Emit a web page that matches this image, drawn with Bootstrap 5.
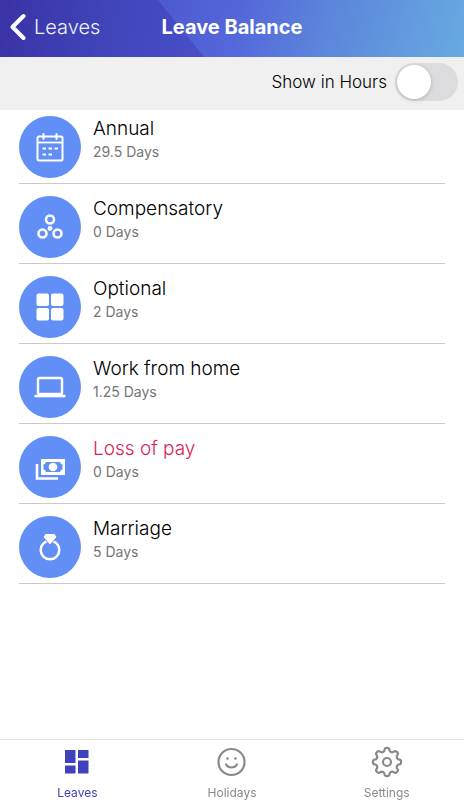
<!DOCTYPE html>
<html lang="en">
<head>
<meta charset="utf-8">
<meta name="viewport" content="width=device-width, initial-scale=1">
<title>Leave Balance</title>
<link href="https://cdn.jsdelivr.net/npm/bootstrap@5.3.0/dist/css/bootstrap.min.css" rel="stylesheet">
<style>
body{font-family:Inter,"Liberation Sans",sans-serif;color:#111}
.app-header{display:grid;grid-template-columns:1fr auto 1fr;height:57px;padding:0 8px 3px;background:linear-gradient(100deg,#3a32a6,#4046ba 25%,#484fc8 45%);position:relative}
.app-header::before{content:"";position:absolute;inset:0;background:linear-gradient(105deg,#4c59cf 33%,#5466da 50%,#5c86db 70%,#68aae2);clip-path:polygon(34% 0,100% 0,100% 100%,44% 100%)}
.app-header>*{position:relative}
.back-link{font-size:20px;line-height:28px;font-weight:350;color:#eef0ff}
.app-title{font-size:20px;line-height:28px;font-weight:700;color:#fff}
.unit-bar{height:53px;background:#f0f0f1;padding:0 6px 3px 0}
.unit-bar label{font-size:17px;line-height:24px;font-weight:350;color:#000}
.ios-switch.form-check-input{width:63px;height:38px;margin:0;float:none;border:0;border-radius:19px;background:#dcdcde;display:flex;align-items:center;padding:0 2px;flex:none}
.ios-switch::before{content:"";width:34px;height:34px;border-radius:50%;background:#fff;box-shadow:0 1px 4px #0003}
.ios-switch.form-check-input:checked{background:#628ff5;justify-content:flex-end}
.leave-list{padding:0 19px}
.leave-item{padding:12px 0 5px;border-bottom:1px solid #cbcbcd;gap:12px}
.leave-item:first-child{padding-top:6px}
.leave-icon{width:62px;height:62px;background:#628ff5;flex:none}
.leave-name{font-size:19px;line-height:26px;font-weight:350;color:#000;margin:0}
.leave-days{font-size:14px;line-height:20px;color:#757577;margin:0}
.leave-unpaid{color:#d81e56}
.tab-bar{height:61px;border-top:1px solid #e2e2e4}
.tab-link{font-size:12px;line-height:18px;color:#89898b;padding-top:6px;gap:6px}
.tab-link.active{color:#4042bb}
</style>
<script src="https://cdn.jsdelivr.net/npm/bootstrap@5.3.0/dist/js/bootstrap.bundle.min.js"></script>
</head>
<body class="d-flex flex-column min-vh-100 bg-white">
<header class="app-header align-items-center">
  <a href="#" class="back-link d-flex align-items-center text-decoration-none gap-2">
    <svg width="18" height="28" viewBox="0 0 18 28" fill="none" stroke="#fff" stroke-width="4" stroke-linecap="round" stroke-linejoin="round"><path d="M15.500 3 4.500 14l11 11"/></svg>Leaves</a>
  <h1 class="app-title m-0">Leave Balance</h1>
</header>
<div class="unit-bar d-flex align-items-center justify-content-end gap-2">
  <label for="hours">Show in Hours</label>
  <input class="form-check-input ios-switch" type="checkbox" role="switch" id="hours">
</div>
<main class="flex-grow-1">
<ul class="leave-list list-unstyled m-0">
  <li class="leave-item d-flex">
    <span class="leave-icon rounded-circle d-flex align-items-center justify-content-center">
      <svg width="32" height="32" viewBox="0 0 32 32" fill="none" stroke="#fff" stroke-width="2"><rect x="3.500" y="5.500" width="25" height="24" rx="1.500"/><path d="M3 11.500h26" stroke-width="1.800"/><path d="M9.500 3v5M22.500 3v5" stroke-linecap="round"/><path d="M8.500 17.500H12M14.500 17.500H18M20.500 17.500H24M8.500 23.500H12M14.500 23.500H18"/></svg></span>
    <div><h2 class="leave-name">Annual</h2><p class="leave-days">29.5 Days</p></div>
  </li>
  <li class="leave-item d-flex">
    <span class="leave-icon rounded-circle d-flex align-items-center justify-content-center">
      <svg width="32" height="32" viewBox="0 0 32 32" fill="none" stroke="#fff" stroke-width="2.500"><circle cx="16" cy="8.500" r="4"/><circle cx="8.500" cy="22.500" r="4"/><circle cx="23.500" cy="22.500" r="4"/><circle cx="16" cy="17.500" r="2.400" fill="#fff" stroke="none"/></svg></span>
    <div><h2 class="leave-name">Compensatory</h2><p class="leave-days">0 Days</p></div>
  </li>
  <li class="leave-item d-flex">
    <span class="leave-icon rounded-circle d-flex align-items-center justify-content-center">
      <svg width="32" height="32" viewBox="0 0 32 32" fill="#fff"><rect x="2.500" y="2.500" width="12.500" height="12.500" rx="2"/><rect x="17" y="2.500" width="12.500" height="12.500" rx="2"/><rect x="2.500" y="17" width="12.500" height="12.500" rx="2"/><rect x="17" y="17" width="12.500" height="12.500" rx="2"/></svg></span>
    <div><h2 class="leave-name">Optional</h2><p class="leave-days">2 Days</p></div>
  </li>
  <li class="leave-item d-flex">
    <span class="leave-icon rounded-circle d-flex align-items-center justify-content-center">
      <svg width="32" height="32" viewBox="0 0 32 32" fill="none" stroke="#fff"><rect x="4" y="7" width="24" height="16" rx="1.500" stroke-width="2.400"/><path d="M.5 25h31" stroke-width="2.600"/></svg></span>
    <div><h2 class="leave-name">Work from home</h2><p class="leave-days">1.25 Days</p></div>
  </li>
  <li class="leave-item d-flex">
    <span class="leave-icon rounded-circle d-flex align-items-center justify-content-center">
      <svg width="32" height="32" viewBox="0 0 32 32"><path d="M3 13v14.500h21" fill="none" stroke="#fff" stroke-width="2.600"/><path fill="#fff" fill-rule="evenodd" d="M7 8h24v16H7zM12 11a3 3 0 0 1-2.500 2.500v5A3 3 0 0 1 12 21h14a3 3 0 0 1 2.500-2.500v-5A3 3 0 0 1 26 11z"/><circle cx="19" cy="16" r="4.300" fill="#fff"/></svg></span>
    <div><h2 class="leave-name leave-unpaid">Loss of pay</h2><p class="leave-days">0 Days</p></div>
  </li>
  <li class="leave-item d-flex">
    <span class="leave-icon rounded-circle d-flex align-items-center justify-content-center">
      <svg width="32" height="32" viewBox="0 0 32 32"><circle cx="16" cy="19" r="9.300" fill="none" stroke="#fff" stroke-width="2.500"/><path d="M11.500 2.500h9L23 6l-7 8-7-8z" fill="#fff" stroke="#628ff5" stroke-width="1"/></svg></span>
    <div><h2 class="leave-name">Marriage</h2><p class="leave-days">5 Days</p></div>
  </li>
</ul>
</main>
<nav class="tab-bar row g-0 text-center bg-white sticky-bottom" aria-label="Main">
  <a href="#" class="tab-link active col d-flex flex-column align-items-center text-decoration-none" aria-current="page">
    <svg width="32" height="32" viewBox="0 0 32 32" fill="#4042bb"><path d="M4 4h10.500v13H4zM17 4h10.500v8H17zM4 19.500h10.500v8H4zM17 14.500h10.500v13H17z"/></svg>Leaves</a>
  <a href="#" class="tab-link col d-flex flex-column align-items-center text-decoration-none">
    <svg width="32" height="32" viewBox="0 0 32 32" fill="none" stroke="#89898b" stroke-width="2.200" stroke-linecap="round"><circle cx="15.500" cy="16" r="13"/><path d="M10 18.500c2.500 4 8.500 4 11 0"/><circle cx="11.500" cy="12.500" r="1.300" fill="#89898b" stroke="none"/><circle cx="19.500" cy="12.500" r="1.300" fill="#89898b" stroke="none"/></svg>Holidays</a>
  <a href="#" class="tab-link col d-flex flex-column align-items-center text-decoration-none">
    <svg width="32" height="32" viewBox="-16 -16 32 32" fill="none" stroke="#89898b" stroke-width="2.200" stroke-linecap="round"><defs><path id="tooth" d="M-4.100-9.900C-2.900-10.400-2.500-11-2.400-12.400Q-2.200-14.100 0-14.100T2.400-12.400C2.500-11 2.900-10.400 4.100-9.900"/></defs><circle r="4"/><use href="#tooth"/><use href="#tooth" transform="rotate(45)"/><use href="#tooth" transform="rotate(90)"/><use href="#tooth" transform="rotate(135)"/><use href="#tooth" transform="rotate(180)"/><use href="#tooth" transform="rotate(225)"/><use href="#tooth" transform="rotate(270)"/><use href="#tooth" transform="rotate(315)"/></svg>Settings</a>
</nav>
</body>
</html>
